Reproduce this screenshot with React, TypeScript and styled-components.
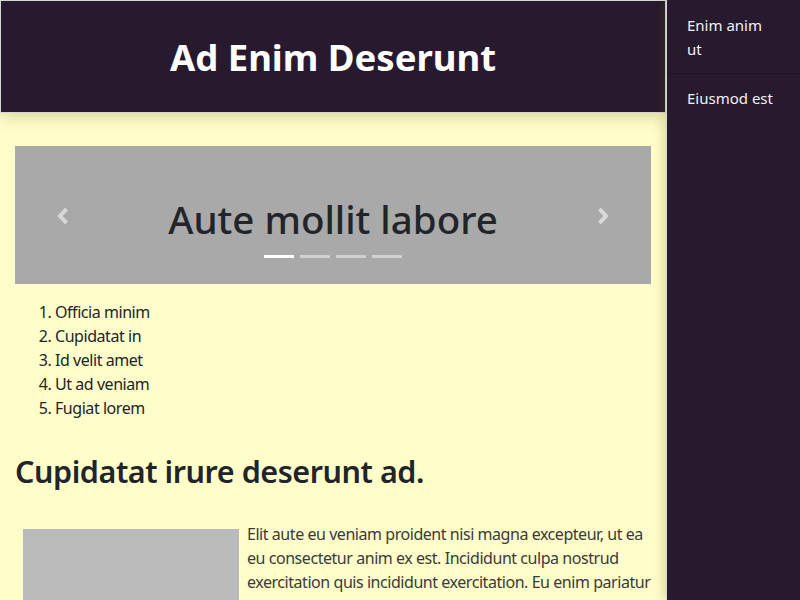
import React from "react";
import styled, { createGlobalStyle } from "styled-components";

const Global = createGlobalStyle`
  html, body { margin: 0; padding: 0; }
  body {
    font-family: "Noto Sans", "Open Sans", sans-serif;
    background: #fffdca;
    color: #212529;
    overflow: hidden;
  }
`;

const Layout = styled.div`
  display: flex;
  width: 800px;
  height: 600px;
  overflow: hidden;
`;

const MainColumn = styled.div`
  flex: 1;
  min-width: 0;
  display: flex;
  flex-direction: column;
  background: #fffdca;
`;

const Header = styled.header`
  height: 111px;
  flex: none;
  background: #281a2e;
  border: 1px solid #d6d6d6;
  display: flex;
  align-items: center;
  justify-content: center;
  box-shadow: 0 4px 14px rgba(90, 90, 0, 0.22);
  position: relative;
  z-index: 1;
`;

const Title = styled.h1`
  margin: 0;
  color: #ffffff;
  font-size: 36.5px;
  font-weight: 700;
`;

const Content = styled.main`
  padding: 33px 15px 0 15px;
`;

const Carousel = styled.div`
  height: 138px;
  background: #a9a9a9;
  display: flex;
  align-items: center;
  justify-content: space-between;
  padding: 0 40px;
  position: relative;
`;

const Arrow = styled.button`
  border: 0;
  background: none;
  padding: 0;
  width: 16px;
  height: 20px;
  display: flex;
  align-items: center;
  justify-content: center;
  margin-top: 1px;
`;

const Slide = styled.h2`
  margin: 0;
  font-size: 38.5px;
  font-weight: 500;
  color: #212529;
  margin-top: 8px;
`;

const Indicators = styled.div`
  position: absolute;
  bottom: 26px;
  left: 0;
  right: 0;
  display: flex;
  justify-content: center;
  gap: 6px;
`;

const Dot = styled.span<{ $active?: boolean }>`
  width: 30px;
  height: 3px;
  background: ${(p) => (p.$active ? "#ffffff" : "#d0d0d0")};
`;

const List = styled.ol`
  margin: 16px 0 0 0;
  padding-left: 40px;
  font-size: 16px;
  letter-spacing: -0.45px;
  line-height: 24px;
`;

const SectionTitle = styled.h2`
  margin: 32px 0 0 0;
  font-size: 30.5px;
  font-weight: 600;
  line-height: 38px;
  letter-spacing: -0.45px;
`;

const Figure = styled.section`
  margin-top: 32px;
`;

const ImageBox = styled.div`
  float: left;
  width: 216px;
  height: 160px;
  margin: 7px 8px 8px 8px;
  background: #bbbbbb;
`;

const Paragraph = styled.p`
  margin: 0;
  font-size: 16px;
  letter-spacing: -0.45px;
  line-height: 24px;
  color: #3a3a3a;
`;

const Sidebar = styled.nav`
  width: 133px;
  flex: none;
  background: #281a2e;
  border-left: 1px solid #d6d6d6;
  box-shadow: -3px 0 10px rgba(90, 90, 0, 0.2);
  position: relative;
  z-index: 2;
`;

const NavItem = styled.a<{ $divider?: boolean }>`
  display: block;
  padding: 13px 20px 12px 20px;
  color: #f2f2f2;
  font-size: 15px;
  line-height: 24px;
  text-decoration: none;
  border-bottom: 1px solid ${(p) => (p.$divider ? "#1e1322" : "transparent")};
  & + & {
    padding-top: 12px;
  }
`;

const Chevron = ({ dir }: { dir: "left" | "right" }) => (
  <svg width="12" height="18" viewBox="0 0 12 18">
    <polyline
      points={dir === "left" ? "9.5,2 3,9 9.5,16" : "2.5,2 9,9 2.5,16"}
      fill="none"
      stroke="#d9d9d9"
      strokeWidth="4"
      strokeLinejoin="miter"
    />
  </svg>
);

export default function App() {
  return (
    <>
      <Global />
      <Layout>
        <MainColumn>
          <Header>
            <Title>Ad Enim Deserunt</Title>
          </Header>
          <Content>
            <Carousel>
              <Arrow aria-label="previous">
                <Chevron dir="left" />
              </Arrow>
              <Slide>Aute mollit labore</Slide>
              <Arrow aria-label="next">
                <Chevron dir="right" />
              </Arrow>
              <Indicators>
                <Dot $active />
                <Dot />
                <Dot />
                <Dot />
              </Indicators>
            </Carousel>
            <List>
              <li>Officia minim</li>
              <li>Cupidatat in</li>
              <li>Id velit amet</li>
              <li>Ut ad veniam</li>
              <li>Fugiat lorem</li>
            </List>
            <SectionTitle>Cupidatat irure deserunt ad.</SectionTitle>
            <Figure>
              <ImageBox />
              <Paragraph>
                Elit aute eu veniam proident nisi magna excepteur, ut ea eu
                consectetur anim ex est. Incididunt culpa nostrud exercitation
                quis incididunt exercitation. Eu enim pariatur ad commodo
                laborum sint velit.
              </Paragraph>
            </Figure>
          </Content>
        </MainColumn>
        <Sidebar>
          <NavItem href="#" $divider>
            Enim anim ut
          </NavItem>
          <NavItem href="#">Eiusmod est</NavItem>
        </Sidebar>
      </Layout>
    </>
  );
}
